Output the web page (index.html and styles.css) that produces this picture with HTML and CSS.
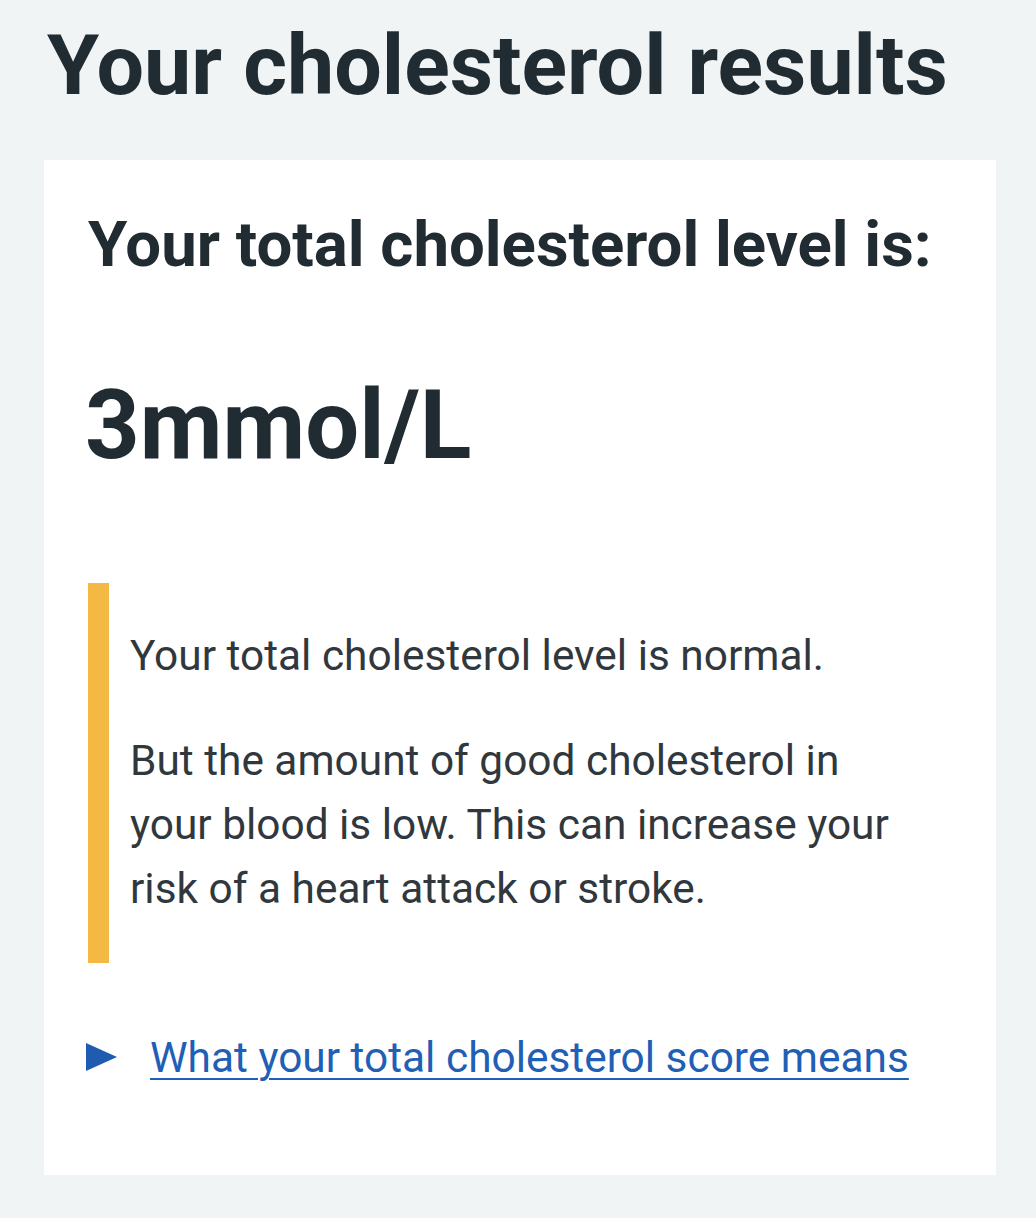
FILE: index.html
```html
<!DOCTYPE html>
<html lang="en">
<head>
<meta charset="utf-8">
<title>Your cholesterol results</title>
<link rel="stylesheet" href="styles.css">
</head>
<body>
  <main class="page">
    <h1 class="page-title">Your cholesterol results</h1>
    <section class="card">
      <h2 class="card-heading">Your total cholesterol level is:</h2>
      <p class="result-value">3mmol/L</p>
      <div class="callout">
        <p class="callout-text">Your total cholesterol level is normal.</p>
        <p class="callout-text">But the amount of good cholesterol in your blood is low. This can increase your risk of a heart attack or stroke.</p>
      </div>
      <div class="details-summary">
        <svg class="details-arrow" width="31" height="28" viewBox="0 0 31 28" aria-hidden="true"><polygon points="0,0 31,14 0,28" fill="#1f5bb0"/></svg>
        <a class="details-link" href="#">What your total cholesterol score means</a>
      </div>
    </section>
  </main>
</body>
</html>
```
FILE: styles.css
```css
html, body {
  margin: 0;
  padding: 0;
  background: #f0f4f5;
}

body {
  font-family: Roboto, "Liberation Sans", Arial, sans-serif;
  color: #212b32;
}

.page {
  padding: 18px 40px 0 44px;
}

.page-title {
  margin: 0 0 46px 3px;
  font-size: 84.3px;
  line-height: 96px;
  font-weight: 700;
}

.card {
  background: #ffffff;
  padding: 47px 44px 85px 44px;
}

.card-heading {
  margin: 0;
  font-size: 63.5px;
  line-height: 76px;
  font-weight: 700;
}

.result-value {
  margin: 87px 0 0 -3px;
  font-size: 95.5px;
  line-height: 110px;
  font-weight: 700;
}

.callout {
  margin: 103px 0 0 0;
  border-left: 21px solid #f4b942;
  padding: 41px 37px 42px 21px;
}

.callout-text {
  margin: 0;
  font-size: 42.4px;
  line-height: 64px;
  color: #30383e;
}

.callout-text + .callout-text {
  margin-top: 41px;
}

.details-summary {
  margin-top: 63px;
  display: flex;
  align-items: center;
  gap: 33px;
  font-size: 42.4px;
  line-height: 64px;
}

.details-arrow {
  flex: none;
  margin-left: -2px;
  margin-top: -2px;
}

.details-link {
  color: #1f5fb5;
  text-decoration: underline;
  text-decoration-thickness: 2px;
  text-underline-offset: 6px;
}
```
